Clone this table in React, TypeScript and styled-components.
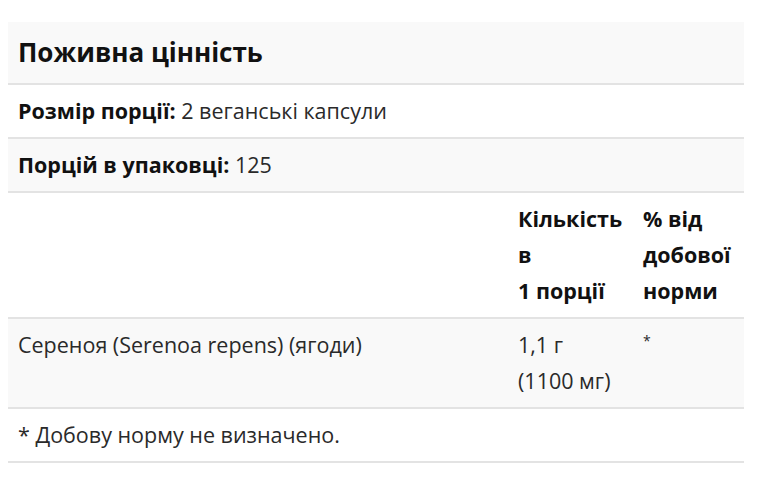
import styled, { createGlobalStyle } from 'styled-components';

const GlobalStyle = createGlobalStyle`
  body {
    margin: 0;
    background: #fff;
    font-family: "Open Sans", "Liberation Sans", Arial, sans-serif;
    color: #222;
  }
`;

const Wrapper = styled.div`
  padding: 22px 24px 0 8px;
`;

const Table = styled.table`
  width: 736px;
  border-collapse: collapse;
  table-layout: fixed;
  font-size: 21.5px;
  line-height: 36px;
`;

const Row = styled.tr<{ $shaded?: boolean }>`
  background: ${({ $shaded }) => ($shaded ? '#f9f9f9' : '#fff')};
  border-bottom: 2px solid #e3e3e3;
`;

const Cell = styled.td<{ $bold?: boolean }>`
  padding: 8px 10px;
  vertical-align: top;
  font-weight: ${({ $bold }) => ($bold ? 700 : 400)};
  color: ${({ $bold }) => ($bold ? '#111' : '#2a2a2a')};
`;

const Line = styled.span`
  display: block;
  white-space: nowrap;
`;

const Title = styled.td`
  padding: 8px 10px;
  font-size: 26px;
  font-weight: 700;
  line-height: 45px;
  color: #111;
`;

const Label = styled.b`
  color: #111;
`;

const Star = styled.span`
  font-size: 14px;
  vertical-align: top;
  line-height: 28px;
`;

export default function App() {
  return (
    <Wrapper>
      <GlobalStyle />
      <Table>
        <colgroup>
          <col style={{ width: 500 }} />
          <col style={{ width: 125 }} />
          <col style={{ width: 111 }} />
        </colgroup>
        <tbody>
          <Row $shaded>
            <Title colSpan={3}>Поживна цінність</Title>
          </Row>
          <Row>
            <Cell colSpan={3}>
              <Label>Розмір порції:</Label> 2 веганські капсули
            </Cell>
          </Row>
          <Row $shaded>
            <Cell colSpan={3}>
              <Label>Порцій в упаковці:</Label> 125
            </Cell>
          </Row>
          <Row>
            <Cell />
            <Cell $bold>
              <Line>Кількість</Line>
              <Line>в</Line>
              <Line>1 порції</Line>
            </Cell>
            <Cell $bold>
              <Line>% від</Line>
              <Line>добової</Line>
              <Line>норми</Line>
            </Cell>
          </Row>
          <Row $shaded>
            <Cell>Сереноя (Serenoa repens) (ягоди)</Cell>
            <Cell>
              <Line>1,1 г</Line>
              <Line>(1100 мг)</Line>
            </Cell>
            <Cell>
              <Star>*</Star>
            </Cell>
          </Row>
          <Row>
            <Cell colSpan={3}>* Добову норму не визначено.</Cell>
          </Row>
        </tbody>
      </Table>
    </Wrapper>
  );
}
